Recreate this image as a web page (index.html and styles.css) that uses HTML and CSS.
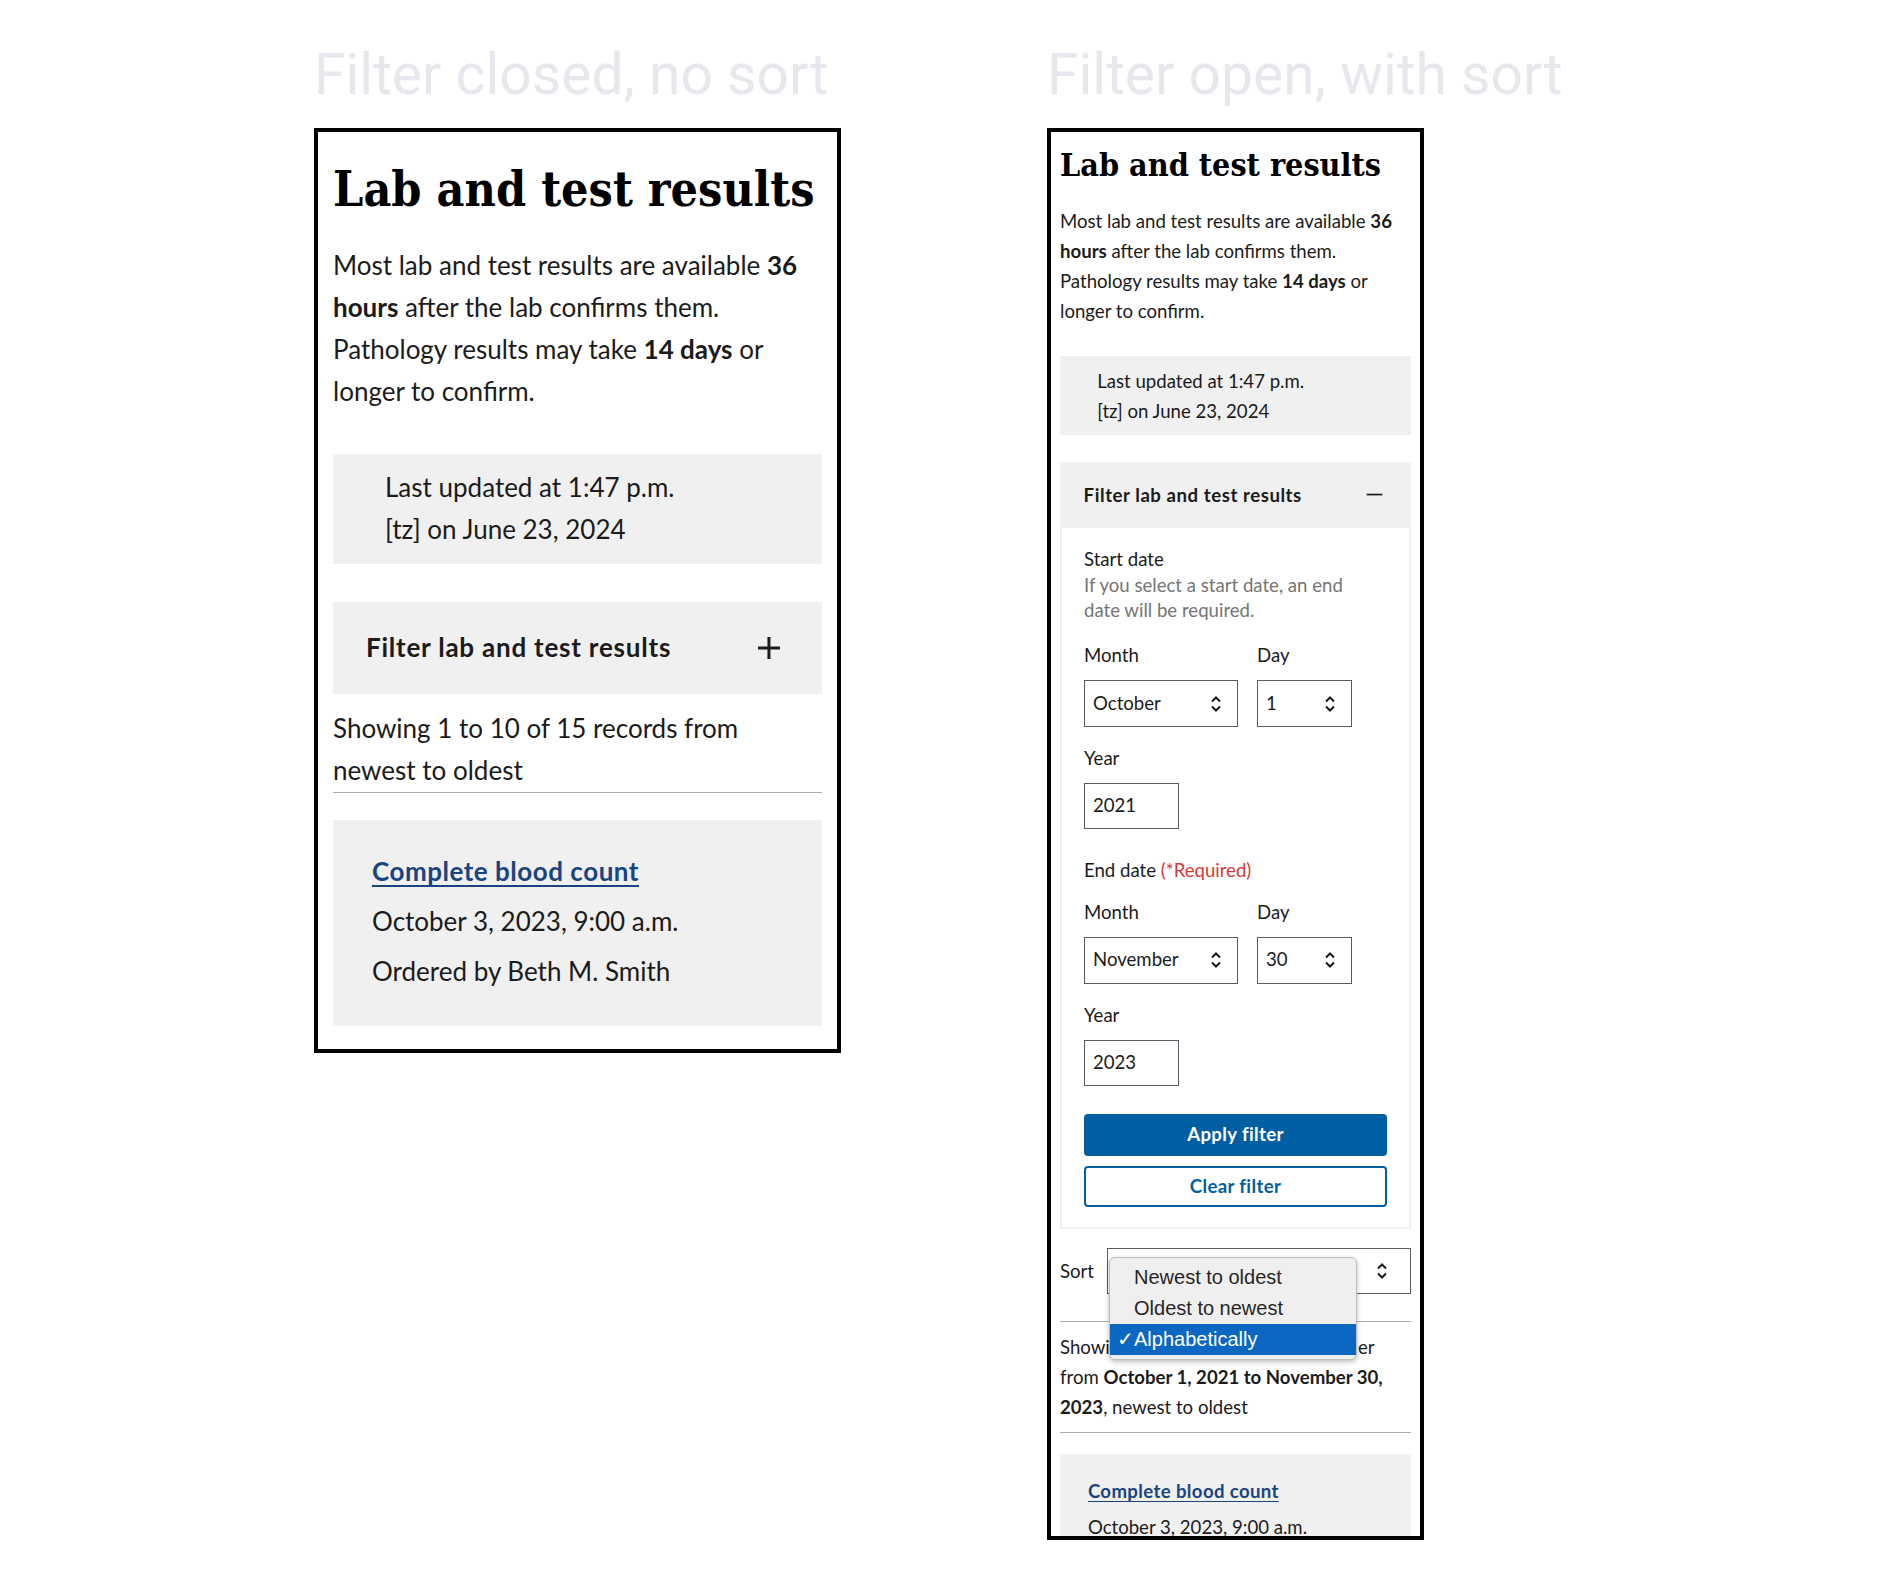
FILE: index.html
```html
<!DOCTYPE html>
<html lang="en">
<head>
<meta charset="utf-8">
<title>Lab and test results – filter states</title>
<link rel="stylesheet" href="styles.css">
</head>
<body>
<main class="board">

  <section class="column">
    <h2 class="column__title">Filter closed, no sort</h2>
    <div class="phone phone--lg">
      <h1 class="phone__heading">Lab and test results</h1>
      <p class="phone__intro">Most lab and test results are available <strong>36 hours</strong> after the lab confirms them. Pathology results may take <strong>14 days</strong> or longer to confirm.</p>
      <div class="status">
        <span class="status__line">Last updated at 1:47 p.m.</span>
        <span class="status__line">[tz] on June 23, 2024</span>
      </div>
      <div class="filter">
        <div class="filter__header">
          <span class="filter__title">Filter lab and test results</span>
          <svg class="filter__icon filter__icon--plus" viewBox="0 0 24 24" aria-hidden="true"><path d="M12 1v22M1 12h22" fill="none" stroke="currentColor" stroke-width="3"/></svg>
        </div>
      </div>
      <p class="summary summary--lg">Showing 1 to 10 of 15 records from newest to oldest</p>
      <div class="record">
        <a class="record__link" href="#">Complete blood count</a>
        <p class="record__meta">October 3, 2023, 9:00 a.m.</p>
        <p class="record__meta">Ordered by Beth M. Smith</p>
      </div>
    </div>
  </section>

  <section class="column">
    <h2 class="column__title">Filter open, with sort</h2>
    <div class="phone phone--sm">
      <h1 class="phone__heading">Lab and test results</h1>
      <p class="phone__intro">Most lab and test results are available <strong>36 hours</strong> after the lab confirms them. Pathology results may take <strong>14 days</strong> or longer to confirm.</p>
      <div class="status">
        <span class="status__line">Last updated at 1:47 p.m.</span>
        <span class="status__line">[tz] on June 23, 2024</span>
      </div>
      <div class="filter">
        <div class="filter__header">
          <span class="filter__title">Filter lab and test results</span>
          <svg class="filter__icon filter__icon--minus" viewBox="0 0 24 24" aria-hidden="true"><path d="M1 12h22" fill="none" stroke="currentColor" stroke-width="2.4"/></svg>
        </div>
        <div class="filter__body">
          <div class="date-group">
            <span class="field__legend">Start date</span>
            <span class="field__hint">If you select a start date, an end date will be required.</span>
            <div class="date-row">
              <div class="date-field">
                <span class="date-field__label">Month</span>
                <div class="select-box select-box--month">
                  <span>October</span>
                  <svg class="chevrons" viewBox="0 0 10 18" aria-hidden="true"><path d="M1 6.5L5 2.5L9 6.5M1 11.5L5 15.5L9 11.5" fill="none" stroke="currentColor" stroke-width="2"/></svg>
                </div>
              </div>
              <div class="date-field">
                <span class="date-field__label">Day</span>
                <div class="select-box select-box--day">
                  <span>1</span>
                  <svg class="chevrons" viewBox="0 0 10 18" aria-hidden="true"><path d="M1 6.5L5 2.5L9 6.5M1 11.5L5 15.5L9 11.5" fill="none" stroke="currentColor" stroke-width="2"/></svg>
                </div>
              </div>
            </div>
            <div class="date-field date-field--year">
              <span class="date-field__label">Year</span>
              <div class="text-box">2021</div>
            </div>
          </div>

          <div class="date-group date-group--end">
            <span class="field__legend">End date <span class="req">(*Required)</span></span>
            <div class="date-row">
              <div class="date-field">
                <span class="date-field__label">Month</span>
                <div class="select-box select-box--month">
                  <span>November</span>
                  <svg class="chevrons" viewBox="0 0 10 18" aria-hidden="true"><path d="M1 6.5L5 2.5L9 6.5M1 11.5L5 15.5L9 11.5" fill="none" stroke="currentColor" stroke-width="2"/></svg>
                </div>
              </div>
              <div class="date-field">
                <span class="date-field__label">Day</span>
                <div class="select-box select-box--day">
                  <span>30</span>
                  <svg class="chevrons" viewBox="0 0 10 18" aria-hidden="true"><path d="M1 6.5L5 2.5L9 6.5M1 11.5L5 15.5L9 11.5" fill="none" stroke="currentColor" stroke-width="2"/></svg>
                </div>
              </div>
            </div>
            <div class="date-field date-field--year">
              <span class="date-field__label">Year</span>
              <div class="text-box">2023</div>
            </div>
          </div>

          <button class="btn btn--primary" type="button">Apply filter</button>
          <button class="btn btn--secondary" type="button">Clear filter</button>
        </div>
      </div>

      <div class="sort">
        <span class="sort__label">Sort</span>
        <div class="sort__control">
          <div class="select-box select-box--sort">
            <svg class="chevrons" viewBox="0 0 10 18" aria-hidden="true"><path d="M1 6.5L5 2.5L9 6.5M1 11.5L5 15.5L9 11.5" fill="none" stroke="currentColor" stroke-width="2"/></svg>
          </div>
          <ul class="sort-menu">
            <li class="sort-menu__item">Newest to oldest</li>
            <li class="sort-menu__item">Oldest to newest</li>
            <li class="sort-menu__item sort-menu__item--selected"><span class="sort-menu__check">✓</span>Alphabetically</li>
          </ul>
        </div>
      </div>

      <p class="summary summary--sm">Showing 1 to 10 of 15 records in order from <strong>October 1, 2021 to November 30, 2023</strong>, newest to oldest</p>

      <div class="record">
        <a class="record__link" href="#">Complete blood count</a>
        <p class="record__meta">October 3, 2023, 9:00 a.m.</p>
        <p class="record__meta">Ordered by Beth M. Smith</p>
      </div>
    </div>
  </section>

</main>
</body>
</html>
```

FILE: styles.css
```css
*,
*::before,
*::after {
  box-sizing: border-box;
}

html,
body {
  margin: 0;
  padding: 0;
}

body {
  width: 1880px;
  min-height: 1576px;
  background: #ffffff;
  font-family: Lato, "Liberation Sans", Arial, sans-serif;
  color: #1b1b1b;
}

/* ---------- board ---------- */
.board {
  display: flex;
  align-items: flex-start;
  gap: 206px;
  padding: 46px 0 0 314px;
}

.column {
  display: flex;
  flex-direction: column;
  align-items: flex-start;
}

.column__title {
  margin: 0 0 24px;
  font-family: Roboto, "Liberation Sans", sans-serif;
  font-weight: 400;
  font-size: 57px;
  line-height: 57.5px;
  color: #e6e8ed;
  white-space: nowrap;
}

/* ---------- phone frame ---------- */
.phone {
  border: 4px solid #000000;
  background: #ffffff;
  line-height: 1.615;
}

.phone--lg {
  width: 527px;
  padding: 0 15px 23px;
  font-size: 26px;
}

.phone--sm {
  width: 377px;
  height: 1412px;
  padding: 0 9px;
  overflow: hidden;
  font-size: 18.6px;
}

.phone__heading {
  margin: 0;
  font-family: "DejaVu Serif Condensed", "DejaVu Serif", serif;
  font-stretch: condensed;
  font-weight: 700;
  line-height: 1.2;
  color: #000000;
  white-space: nowrap;
}

.phone--lg .phone__heading {
  margin-top: 29.5px;
  font-size: 48px;
}

.phone--sm .phone__heading {
  margin-top: 14.5px;
  font-size: 32px;
}

.phone__intro {
  margin: 26px 0 0;
}

.phone--sm .phone__intro {
  margin-top: 22px;
}

/* ---------- status ---------- */
.status {
  margin-top: 1.6em;
  padding: 0.5em 1em 0.5em 2em;
  background: #f0f0f0;
}

.status__line {
  display: block;
}

/* ---------- filter accordion ---------- */
.filter {
  margin-top: 1.46em;
}

.filter__header {
  display: flex;
  align-items: center;
  justify-content: space-between;
  padding: 0.96em 1.5em 0.96em 1.27em;
  background: #f0f0f0;
  font-weight: 700;
}

.phone--lg .filter__header {
  padding-right: 1.6em;
}

.filter__title {
  letter-spacing: 0.03em;
}

.filter__icon {
  flex: none;
  width: 0.92em;
  height: 0.92em;
  color: #1b1b1b;
}

.filter__body {
  padding: 19.5px 22px 20.5px;
  border: 2px solid #f0f0f0;
  border-top: 0;
  line-height: 25.5px;
}

.field__legend {
  display: block;
}

.field__hint {
  display: block;
  max-width: 15em;
  color: #757575;
}

.req {
  color: #d83933;
}

.date-group--end {
  margin-top: 29px;
}

.date-row {
  display: flex;
  gap: 19px;
  margin-top: 19.5px;
}

.date-group--end .date-row {
  margin-top: 16px;
}

.date-field {
  display: flex;
  flex-direction: column;
  align-items: flex-start;
}

.date-field--year {
  margin-top: 19px;
}

.date-field__label {
  display: block;
  margin-bottom: 11.5px;
}

.select-box {
  display: flex;
  align-items: center;
  justify-content: space-between;
  height: 47px;
  padding: 0 16px 0 8px;
  border: 1.5px solid #565c65;
  background: #ffffff;
}

.select-box--month {
  width: 154px;
}

.select-box--day {
  width: 95px;
}

.select-box--sort {
  height: 46px;
  padding-right: 23px;
  justify-content: flex-end;
}

.chevrons {
  flex: none;
  width: 10px;
  height: 18px;
  color: #1b1b1b;
}

.text-box {
  display: flex;
  align-items: center;
  width: 95px;
  height: 46px;
  padding: 0 8px;
  border: 1.5px solid #565c65;
  background: #ffffff;
}

.btn {
  display: block;
  width: 100%;
  border-radius: 4px;
  font-family: inherit;
  font-size: inherit;
  font-weight: 700;
  letter-spacing: 0.02em;
  line-height: 1;
  cursor: pointer;
}

.btn--primary {
  height: 42px;
  margin-top: 28px;
  border: 0;
  background: #005ea2;
  color: #ffffff;
}

.btn--secondary {
  height: 41px;
  margin-top: 10px;
  border: 2px solid #005ea2;
  background: #ffffff;
  color: #005ea2;
}

/* ---------- sort ---------- */
.sort {
  display: flex;
  align-items: center;
  gap: 13px;
  margin-top: 19px;
  padding-bottom: 27px;
  border-bottom: 1px solid #a9aeb1;
}

.sort__control {
  position: relative;
  flex: 1;
}

.sort-menu {
  position: absolute;
  top: 9px;
  left: 2px;
  z-index: 2;
  width: 248px;
  margin: 0;
  padding: 4px 0;
  list-style: none;
  background: #efefef;
  border: 1px solid #bcbcbc;
  border-radius: 6px;
  box-shadow: 0 2px 5px rgba(0, 0, 0, 0.25);
  font-family: "Liberation Sans", Arial, sans-serif;
  font-size: 20px;
  line-height: 31px;
  color: #262626;
}

.sort-menu__item {
  position: relative;
  padding-left: 24px;
}

.sort-menu__item--selected {
  background: #0b67c2;
  color: #ffffff;
}

.sort-menu__check {
  position: absolute;
  left: 7px;
}

/* ---------- summary + records ---------- */
.summary {
  margin: 0;
  border-bottom: 1px solid #a9aeb1;
}

.summary--lg {
  margin-top: 14px;
  padding-bottom: 0;
}

.summary--sm {
  padding: 10px 0;
}

.record {
  margin-top: 1.1em;
  padding: 1.2em 1.5em 1.3em;
  background: #f0f0f0;
}

.phone--lg .record {
  margin-top: 27px;
}

.record__link {
  font-weight: 700;
  letter-spacing: 0.02em;
  color: #1a4480;
  text-decoration: underline;
  text-decoration-thickness: 0.07em;
  text-underline-offset: 0.15em;
}

.record__meta {
  margin: 0.3em 0 0;
}
```
